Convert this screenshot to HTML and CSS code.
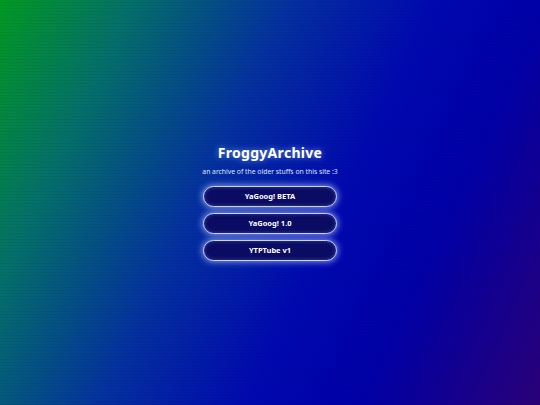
FILE: index.html
```html
<!DOCTYPE html>
<html>
<head>
<meta charset="utf-8">
<link rel="stylesheet" href="styles.css">
</head>
<body>
<main class="page">
  <div class="card">
    <h1 class="title">FroggyArchive</h1>
    <p class="subtitle">an archive of the older stuffs on this site :3</p>
    <nav class="links">
      <a class="btn" href="#">YaGoog! BETA</a>
      <a class="btn" href="#">YaGoog! 1.0</a>
      <a class="btn" href="#">YTPTube v1</a>
    </nav>
  </div>
</main>
</body>
</html>
```
FILE: styles.css
```css
html, body {
  margin: 0;
  padding: 0;
  height: 100%;
}
body {
  font-family: "Noto Sans", "Open Sans", sans-serif;
  color: #fff;
  background:
    repeating-linear-gradient(to bottom, rgba(0,0,0,0) 0, rgba(0,0,0,0) 2px, rgba(0,0,0,0.06) 2px, rgba(0,0,0,0.06) 3px),
    linear-gradient(115deg, #009a22 0%, #04706a 18%, #0430a0 40%, #0008b0 60%, #0000a8 75%, #2a0078 100%);
}
.page {
  height: 100%;
  display: flex;
  align-items: center;
  justify-content: center;
}
.card {
  display: flex;
  flex-direction: column;
  align-items: center;
  width: 134px;
  margin-top: -2px;
}
.title {
  margin: 0;
  font-size: 14px;
  font-weight: 700;
  letter-spacing: 0.3px;
  line-height: 20px;
  text-shadow: 0 0 6px rgba(160, 200, 255, 0.7);
}
.subtitle {
  margin: 3px 0 8px;
  font-size: 6.8px;
  line-height: 12px;
  white-space: nowrap;
  color: #dfe6ff;
}
.links {
  display: flex;
  flex-direction: column;
  gap: 6px;
  width: 100%;
}
.btn {
  display: flex;
  align-items: center;
  justify-content: center;
  height: 19px;
  border: 1.5px solid #c8d4ff;
  border-radius: 11px;
  background: #0a0b62;
  color: #fff;
  text-decoration: none;
  font-size: 7.5px;
  font-weight: 700;
  box-shadow: 0 0 6px 1px rgba(170, 190, 255, 0.75), inset 0 0 4px rgba(150, 170, 255, 0.35);
}
```
